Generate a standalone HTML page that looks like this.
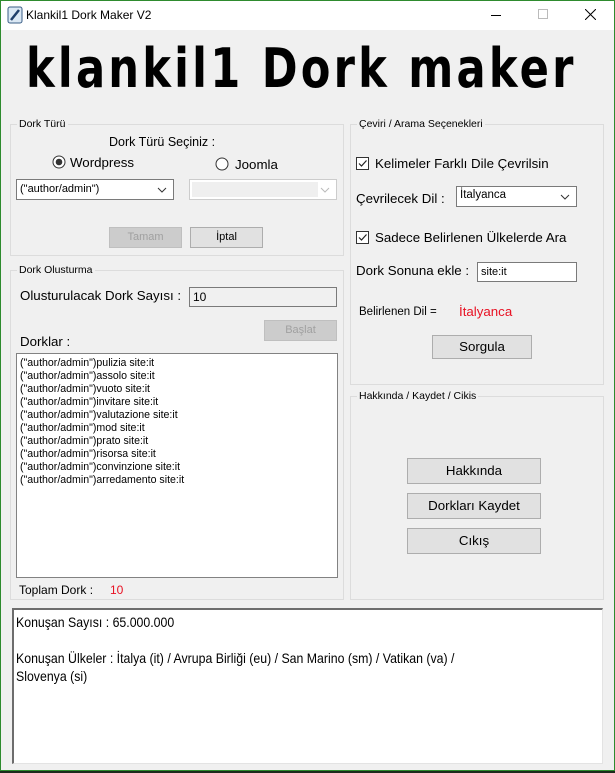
<!DOCTYPE html>
<html><head><meta charset="utf-8"><style>
*{margin:0;padding:0;box-sizing:border-box}
body{width:615px;height:773px;overflow:hidden;background:#1c2a1c;font-family:"Liberation Sans",sans-serif;color:#000;position:relative}
#win{position:absolute;left:0;top:0;width:615px;height:771px;background:#f0f0f0;overflow:hidden}
#bd{position:absolute;left:0;top:0;width:615px;height:771px;border:1px solid #2e8b2e;z-index:9}
.a{position:absolute;white-space:nowrap}
.tb{position:absolute;left:0;top:0;width:615px;height:30px;background:#fff}
.gb{position:absolute;border:1px solid #dcdcdc}
.gl{position:absolute;background:#f0f0f0;font-size:10.5px;padding:0 2px;top:-8px;left:6px;line-height:14px}
.btn{position:absolute;background:#e1e1e1;border:1px solid #adadad;text-align:center;font-size:11px}
.dis{background:#cccccc;border-color:#bfbfbf;color:#a0a0a0}
.tx{position:absolute;background:#fff;border:1px solid #7a7a7a;font-size:11px;padding-left:3px}
.chk{position:absolute;width:13px;height:13px;border:1px solid #333;background:#fff}
.t{font-size:13.3px}
</style></head><body>
<div id="win">
<div class="tb">
 <svg class="a" style="left:7px;top:6px" width="16" height="18" viewBox="0 0 16 18"><rect x="1" y="1" width="14" height="16" rx="2" fill="#dbe8f4" stroke="#3a5e86"/><path d="M4 14 L12 4" stroke="#1f3f6a" stroke-width="2.5"/></svg>
 <div class="a" style="left:26px;top:8px;font-size:12px">Klankil1 Dork Maker V2</div>
 <div class="a" style="left:491px;top:15px;width:10px;height:1px;background:#000"></div>
 <div class="a" style="left:538px;top:9px;width:10px;height:10px;border:1px solid #bbb"></div>
 <svg class="a" style="left:585px;top:9px" width="11" height="11"><path d="M0 0L11 11M11 0L0 11" stroke="#000" stroke-width="1"/></svg>
</div>
<div class="a" style="left:26px;top:38px;font-size:54px;font-weight:bold;letter-spacing:4px;transform:scaleX(0.8);transform-origin:left;line-height:62px;font-family:'DejaVu Sans',sans-serif">klankil1 Dork maker</div>

<div class="gb" style="left:10px;top:124px;width:334px;height:132px"><div class="gl">Dork Türü</div></div>
<div class="a" style="left:109px;top:135px;font-size:12.5px">Dork Türü Seçiniz :</div>
<svg class="a" style="left:52px;top:155px" width="14" height="14"><circle cx="7" cy="7" r="6" fill="#fff" stroke="#333"/><circle cx="7" cy="7" r="3.3" fill="#333"/></svg>
<div class="a t" style="left:70px;top:155px">Wordpress</div>
<svg class="a" style="left:215px;top:157px" width="14" height="14"><circle cx="7" cy="7" r="6" fill="#fff" stroke="#333"/></svg>
<div class="a t" style="left:235px;top:157px">Joomla</div>
<div class="tx" style="left:16px;top:179px;width:158px;height:21px;line-height:19px">("author/admin")<svg class="a" style="right:6px;top:7px" width="10" height="6"><path d="M1 1L5 5L9 1" stroke="#333" fill="none"/></svg></div>
<div class="tx" style="left:189px;top:179px;width:148px;height:21px;border-color:#ccc"><div class="a" style="left:2px;top:2px;width:126px;height:15px;background:#efefef"></div><svg class="a" style="right:6px;top:7px" width="10" height="6"><path d="M1 1L5 5L9 1" stroke="#bbb" fill="none"/></svg></div>
<div class="btn dis" style="left:109px;top:227px;width:73px;height:21px;line-height:19px">Tamam</div>
<div class="btn" style="left:190px;top:227px;width:73px;height:21px;line-height:19px">İptal</div>

<div class="gb" style="left:10px;top:270px;width:334px;height:330px"><div class="gl">Dork Olusturma</div></div>
<div class="a t" style="left:20px;top:288px">Olusturulacak Dork Sayısı :</div>
<div class="tx" style="left:189px;top:287px;width:148px;height:20px;line-height:18px;background:#f0f0f0;font-size:12px">10</div>
<div class="btn dis" style="left:264px;top:320px;width:73px;height:21px;line-height:19px">Başlat</div>
<div class="a t" style="left:20px;top:334px">Dorklar :</div>
<div class="tx" style="left:16px;top:353px;width:322px;height:225px;border-color:#828282;padding-left:3px;padding-top:3px;line-height:13px;font-size:10.6px">("author/admin")pulizia site:it<br>("author/admin")assolo site:it<br>("author/admin")vuoto site:it<br>("author/admin")invitare site:it<br>("author/admin")valutazione site:it<br>("author/admin")mod site:it<br>("author/admin")prato site:it<br>("author/admin")risorsa site:it<br>("author/admin")convinzione site:it<br>("author/admin")arredamento site:it</div>
<div class="a" style="left:19px;top:583px;font-size:12px">Toplam Dork :</div>
<div class="a" style="left:110px;top:583px;font-size:12px;color:#e81123">10</div>

<div class="gb" style="left:350px;top:124px;width:254px;height:261px"><div class="gl">Çeviri / Arama Seçenekleri</div></div>
<div class="chk" style="left:356px;top:157px"><svg width="11" height="11" style="position:absolute;left:0;top:0"><path d="M2 5.5L4.5 8L9.5 2.5" stroke="#222" fill="none" stroke-width="1.2"/></svg></div>
<div class="a t" style="left:375px;top:156px">Kelimeler Farklı Dile Çevrilsin</div>
<div class="a t" style="left:356px;top:191px">Çevrilecek Dil :</div>
<div class="tx" style="left:456px;top:186px;width:121px;height:21px;line-height:17px;font-size:11.5px">İtalyanca<svg class="a" style="right:6px;top:7px" width="10" height="6"><path d="M1 1L5 5L9 1" stroke="#333" fill="none"/></svg></div>
<div class="chk" style="left:356px;top:231px"><svg width="11" height="11" style="position:absolute;left:0;top:0"><path d="M2 5.5L4.5 8L9.5 2.5" stroke="#222" fill="none" stroke-width="1.2"/></svg></div>
<div class="a t" style="left:375px;top:230px">Sadece Belirlenen Ülkelerde Ara</div>
<div class="a t" style="left:356px;top:263px">Dork Sonuna ekle :</div>
<div class="tx" style="left:477px;top:262px;width:100px;height:20px;line-height:18px">site:it</div>
<div class="a" style="left:359px;top:306px;font-size:11.5px">Belirlenen Dil =</div>
<div class="a t" style="left:459px;top:304px;color:#e81123">İtalyanca</div>
<div class="btn t" style="left:432px;top:335px;width:100px;height:24px;line-height:22px">Sorgula</div>

<div class="gb" style="left:350px;top:396px;width:254px;height:204px"><div class="gl">Hakkında / Kaydet / Cikis</div></div>
<div class="btn t" style="left:407px;top:458px;width:134px;height:26px;line-height:24px">Hakkında</div>
<div class="btn t" style="left:407px;top:493px;width:134px;height:26px;line-height:24px">Dorkları Kaydet</div>
<div class="btn t" style="left:407px;top:528px;width:134px;height:26px;line-height:24px">Cıkış</div>

<div class="a" style="left:12px;top:608px;width:591px;height:156px;background:#fff;border-top:2px solid #6d6d6d;border-left:2px solid #6d6d6d;border-right:1px solid #e3e3e3;border-bottom:1px solid #e3e3e3;overflow:hidden">
 <div style="position:absolute;left:2px;top:3px;font-size:14px;line-height:18px;white-space:nowrap;transform:scaleX(0.88);transform-origin:left top">Konuşan Sayısı : 65.000.000<br><br>Konuşan Ülkeler : İtalya (it) / Avrupa Birliği (eu) / San Marino (sm) / Vatikan (va) /<br>Slovenya (si)</div>
</div>
</div>
<div id="bd"></div>
</body></html>
